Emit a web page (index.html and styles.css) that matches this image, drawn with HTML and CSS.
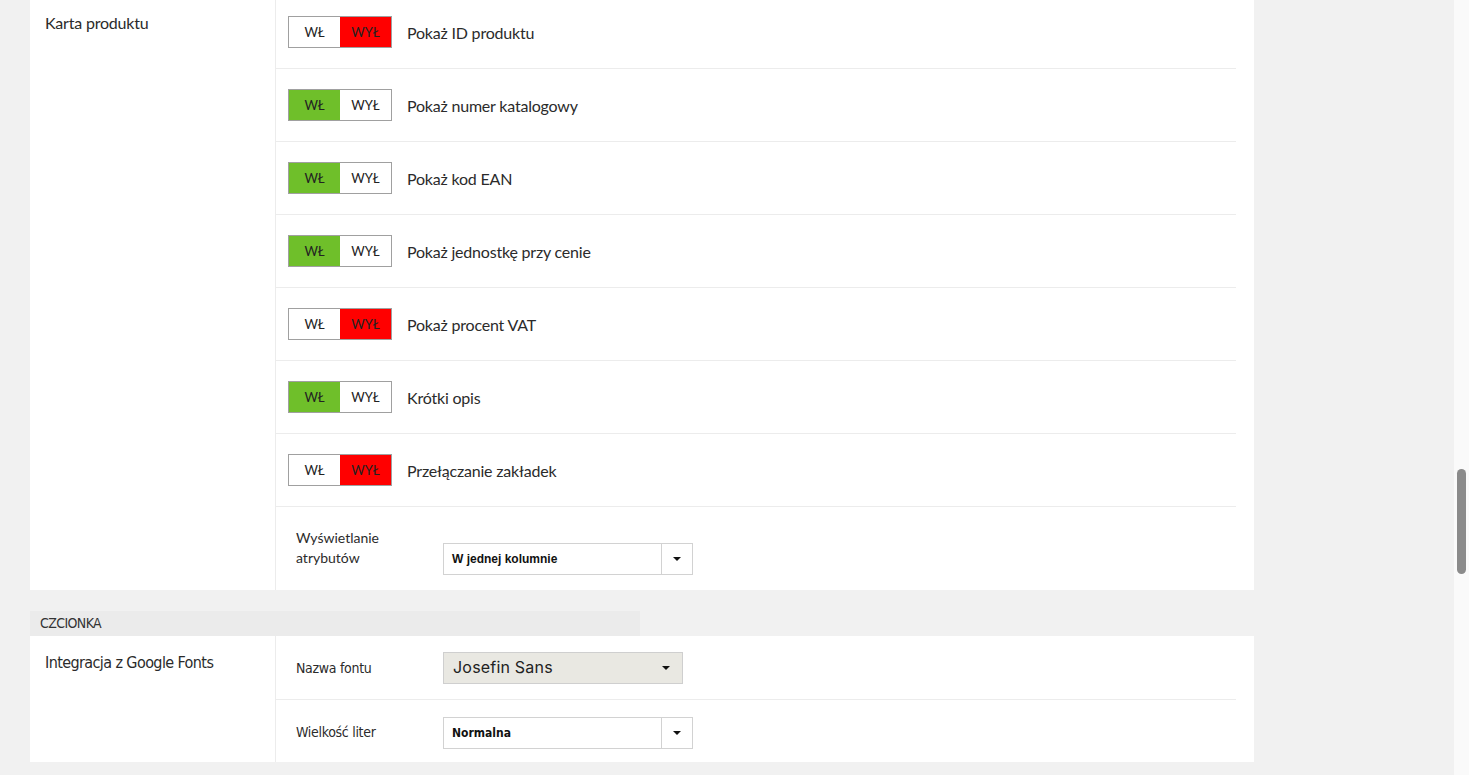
FILE: index.html
```html
<!DOCTYPE html>
<html lang="pl">
<head>
<meta charset="utf-8">
<title>Ustawienia</title>
<link rel="stylesheet" href="styles.css">
</head>
<body>
<div class="page">
  <main class="main">
    <section class="panel panel-first">
      <div class="side">Karta produktu</div>
      <div class="body">
        <div class="row">
          <div class="toggle"><span class="on">WŁ</span><span class="off active-off">WYŁ</span></div>
          <span class="opt">Pokaż ID produktu</span>
        </div>
        <div class="row">
          <div class="toggle"><span class="on active-on">WŁ</span><span class="off">WYŁ</span></div>
          <span class="opt">Pokaż numer katalogowy</span>
        </div>
        <div class="row">
          <div class="toggle"><span class="on active-on">WŁ</span><span class="off">WYŁ</span></div>
          <span class="opt">Pokaż kod EAN</span>
        </div>
        <div class="row">
          <div class="toggle"><span class="on active-on">WŁ</span><span class="off">WYŁ</span></div>
          <span class="opt">Pokaż jednostkę przy cenie</span>
        </div>
        <div class="row">
          <div class="toggle"><span class="on">WŁ</span><span class="off active-off">WYŁ</span></div>
          <span class="opt">Pokaż procent VAT</span>
        </div>
        <div class="row">
          <div class="toggle"><span class="on active-on">WŁ</span><span class="off">WYŁ</span></div>
          <span class="opt">Krótki opis</span>
        </div>
        <div class="row">
          <div class="toggle"><span class="on">WŁ</span><span class="off active-off">WYŁ</span></div>
          <span class="opt">Przełączanie zakładek</span>
        </div>
        <div class="row row-field row-attr">
          <span class="field-label">Wyświetlanie<br>atrybutów</span>
          <div class="select">
            <span class="select-text">W jednej kolumnie</span>
            <span class="select-btn"><span class="caret"></span></span>
          </div>
        </div>
      </div>
    </section>

    <div class="section-head">CZCIONKA</div>

    <section class="panel panel-second">
      <div class="side side-narrow">Integracja z Google Fonts</div>
      <div class="body">
        <div class="row row-field row-font">
          <span class="field-label narrow">Nazwa fontu</span>
          <div class="font-select">
            <span class="font-name">Josefin Sans</span>
            <span class="caret"></span>
          </div>
        </div>
        <div class="row row-field row-size">
          <span class="field-label narrow">Wielkość liter</span>
          <div class="select">
            <span class="select-text narrow-bold">Normalna</span>
            <span class="select-btn"><span class="caret"></span></span>
          </div>
        </div>
      </div>
    </section>
  </main>
  <div class="scrollbar"><div class="thumb"></div></div>
</div>
</body>
</html>
```

FILE: styles.css
```css
html, body {
  margin: 0;
  padding: 0;
  height: 775px;
  overflow: hidden;
  background: #f1f1f1;
}
body {
  font-family: Lato, "Open Sans", sans-serif;
  color: #2b2b2b;
}
.page {
  display: flex;
  height: 775px;
}
.main {
  flex: 1;
  padding-left: 30px;
}
.scrollbar {
  width: 15px;
  background: #fafafa;
  display: flex;
  flex-direction: column;
  align-items: center;
  padding-top: 469px;
  box-sizing: border-box;
}
.thumb {
  width: 9px;
  height: 105px;
  border-radius: 5px;
  background: #8b8b8b;
}
.panel {
  width: 1224px;
  background: #fff;
  display: flex;
}
.panel-first {
  margin-top: -4px;
}
.side {
  width: 230px;
  padding: 17px 0 0 15px;
  border-right: 1px solid #ececec;
  font-size: 16px;
  line-height: 20px;
  letter-spacing: -0.2px;
  flex-shrink: 0;
}
.side-narrow {
  padding-top: 17px;
  font-family: "DejaVu Sans Condensed", Roboto, sans-serif;
  font-stretch: condensed;
  font-size: 16px;
  letter-spacing: -0.6px;
}
.body {
  width: 960px;
  display: flex;
  flex-direction: column;
}
.row {
  height: 72px;
  display: flex;
  align-items: center;
  padding-left: 12px;
  border-bottom: 1px solid #ececec;
}
.row:last-child {
  border-bottom: none;
}
.toggle {
  display: flex;
  width: 102px;
  height: 30px;
  border: 1px solid #a0a0a0;
  font-size: 13px;
}
.toggle span {
  display: flex;
  align-items: center;
  justify-content: center;
  height: 100%;
  color: #222;
}
.toggle .on {
  width: 51px;
}
.toggle .off {
  width: 51px;
}
.active-on {
  background: #6fbf2a;
}
.active-off {
  background: #ff0000;
}
.opt {
  margin-left: 15px;
  font-size: 16px;
  letter-spacing: -0.2px;
}
.row-field {
  padding-left: 20px;
}
.row-attr {
  height: 83px;
  align-items: flex-start;
  box-sizing: border-box;
  padding-top: 21px;
}
.field-label {
  width: 147px;
  font-size: 14px;
  line-height: 20px;
  flex-shrink: 0;
}
.row-attr .select {
  margin-top: 15px;
}
.narrow {
  font-family: "DejaVu Sans Condensed", Roboto, sans-serif;
  font-stretch: condensed;
  letter-spacing: -0.3px;
}
.select {
  width: 248px;
  height: 30px;
  border: 1px solid #d2d2d2;
  display: flex;
  align-items: center;
  background: #fff;
}
.select-text {
  flex: 1;
  padding-left: 8px;
  font-family: "Liberation Sans", Arial, sans-serif;
  font-weight: bold;
  font-size: 12px;
  color: #111;
}
.narrow-bold {
  font-family: "DejaVu Sans Condensed", Roboto, sans-serif;
  font-stretch: condensed;
}
.select-btn {
  width: 30px;
  height: 100%;
  border-left: 1px solid #d2d2d2;
  display: flex;
  align-items: center;
  justify-content: center;
}
.caret {
  width: 0;
  height: 0;
  border-left: 4px solid transparent;
  border-right: 4px solid transparent;
  border-top: 4px solid #111;
}
.section-head {
  width: 600px;
  height: 25px;
  margin-top: 21px;
  padding-left: 10px;
  background: #ebebeb;
  font-family: "DejaVu Sans Condensed", Roboto, sans-serif;
  font-stretch: condensed;
  font-size: 14px;
  letter-spacing: -0.6px;
  line-height: 25px;
  color: #333;
}
.panel-second .row-font {
  height: 63px;
}
.panel-second .row-size {
  height: 62px;
  align-items: flex-start;
  box-sizing: border-box;
  padding-top: 17px;
}
.panel-second .row-size .field-label {
  line-height: 30px;
}
.font-select {
  height: 30px;
  border: 1px solid #cfcfcf;
  background: #e9e8e2;
  display: flex;
  align-items: center;
  padding: 0 12px 0 9px;
  box-sizing: content-box;
  width: 217px;
}
.font-name {
  flex: 1;
  font-family: Inter, Lato, sans-serif;
  font-size: 16px;
  line-height: 20px;
  padding-bottom: 2px;
  color: #222;
  letter-spacing: 0.2px;
}
```
